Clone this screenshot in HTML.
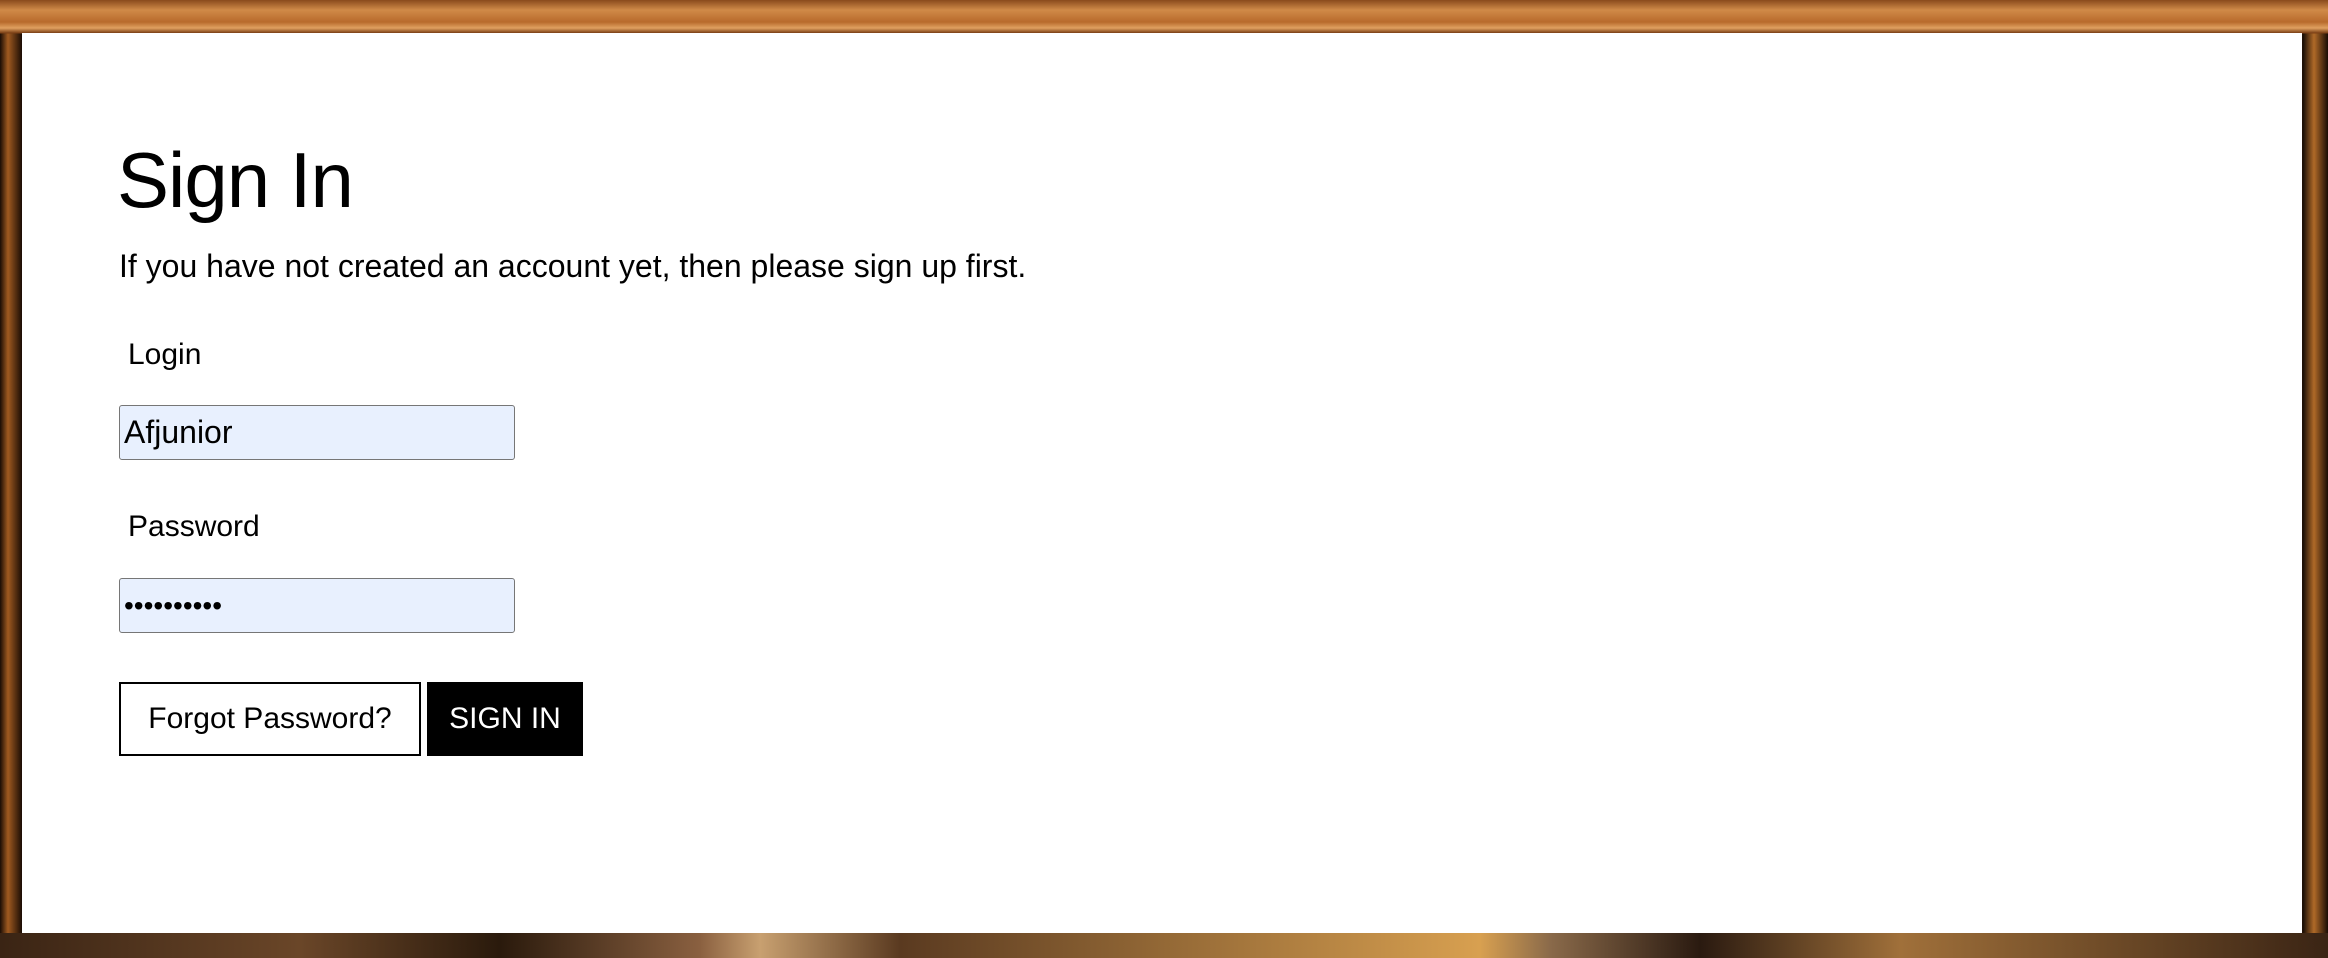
<!DOCTYPE html>
<html><head><meta charset="utf-8"><style>
html,body{margin:0;padding:0;}
body{width:2328px;height:958px;position:relative;overflow:hidden;
font-family:"Liberation Sans",sans-serif;
background:
linear-gradient(180deg,#8a4a1c 0px,#d08a48 10px,#b86a2c 22px,#e0a060 28px,#7a3e14 33px,transparent 34px),
linear-gradient(90deg,#1a0c04 0,#a05a20 8px,#1a0c04 22px,transparent 23px,transparent 2302px,#1a0e06 2303px,#b06a28 2314px,#1a0c04 2328px),
#2a1608;}
.panel{position:absolute;left:22px;top:33px;width:2280px;height:900px;background:#fff;}
h1{position:absolute;left:117px;top:130px;margin:0;font-weight:400;font-size:78px;line-height:100px;color:#000;letter-spacing:-1px}
.sub{position:absolute;left:119px;top:247px;font-size:32px;line-height:38px;color:#000;}
.lab{position:absolute;left:128px;font-size:30px;line-height:36px;}
.inp{position:absolute;left:119px;width:390px;height:53px;background:#e8f0fe;border:1px solid #767676;border-radius:3px;font-size:32px;line-height:53px;padding-left:4px;box-sizing:content-box;}
.btn{position:absolute;top:682px;height:74px;box-sizing:border-box;font-size:30px;line-height:74px;text-align:center;}
</style></head><body>
<div style="position:absolute;left:0;top:933px;width:2328px;height:25px;background:linear-gradient(90deg,#3a2414 0,#6a4628 300px,#2a1a0c 500px,#8a6040 700px,#c8a070 760px,#5a3a20 900px,#d8a050 1480px,#8a6a4a 1550px,#2a1a10 1700px,#a0703a 1900px,#3a2414 2328px);"></div>
<div class="panel"></div>
<h1>Sign In</h1>
<div class="sub">If you have not created an account yet, then please sign up first.</div>
<div class="lab" style="top:337px">Login</div>
<div class="inp" style="top:405px">Afjunior</div>
<div class="lab" style="top:509px">Password</div>
<div class="inp" style="top:578px;font-size:28px;">••••••••••</div>
<div class="btn" style="left:119px;width:302px;border:2px solid #000;background:#fff;color:#000;line-height:70px">Forgot Password?</div>
<div class="btn" style="left:427px;width:156px;background:#000;color:#fff;">SIGN IN</div>
</body></html>
